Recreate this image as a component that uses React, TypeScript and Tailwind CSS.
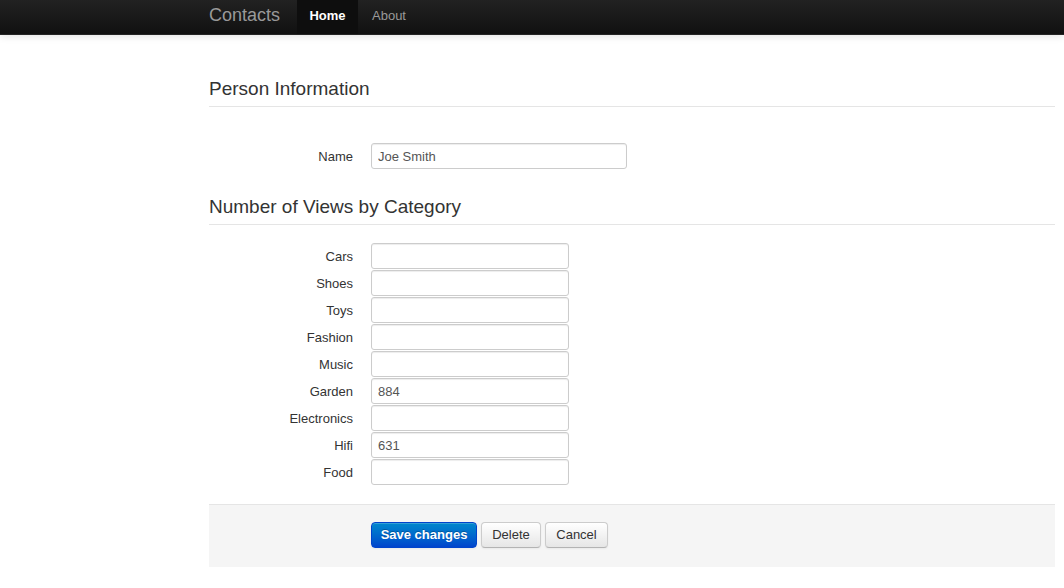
import React from "react";

const categories: { label: string; value: string }[] = [
  { label: "Cars", value: "" },
  { label: "Shoes", value: "" },
  { label: "Toys", value: "" },
  { label: "Fashion", value: "" },
  { label: "Music", value: "" },
  { label: "Garden", value: "884" },
  { label: "Electronics", value: "" },
  { label: "Hifi", value: "631" },
  { label: "Food", value: "" },
];

function Field({ label, value, width }: { label: string; value: string; width: string }) {
  return (
    <div className="flex items-center h-[26px]">
      <label className="w-[144px] shrink-0 text-right text-[13px] text-[#333] pt-[1px]">{label}</label>
      <div className="ml-[18px]">
        <input
          readOnly
          value={value}
          className={`${width} h-[26px] border border-[#cccccc] rounded-[3px] bg-white px-[6px] text-[13px] text-[#555] shadow-[inset_0_1px_1px_rgba(0,0,0,0.075)] outline-none`}
        />
      </div>
    </div>
  );
}

function Legend({ children }: { children: React.ReactNode }) {
  return (
    <div className="h-[39px] border-b border-[#e5e5e5] flex items-center text-[19px] text-[#333] leading-none pt-[2px]">
      {children}
    </div>
  );
}

export default function App() {
  return (
    <div className="min-h-[588px] bg-white" style={{ fontFamily: '"Liberation Sans", Arial, Helvetica, sans-serif' }}>
      <div className="h-[35px] bg-gradient-to-b from-[#222222] to-[#111111] border-b border-[#252525] shadow-[0_1px_8px_rgba(0,0,0,0.12)]">
        <div className="ml-[209px] flex h-full items-stretch">
          <div className="flex items-center pb-[3px] text-[18px] text-[#999] w-[88px]">Contacts</div>
          <div className="flex items-center pb-[3px] bg-[#0e0e0e] w-[61px] justify-center text-[13px] font-bold text-white [text-shadow:0_-1px_0_rgba(0,0,0,0.25)]">
            Home
          </div>
          <div className="flex items-center pb-[3px] px-[14px] text-[13px] text-[#999]">About</div>
        </div>
      </div>

      <div className="ml-[209px] w-[846px]">
        <div className="mt-[33px]">
          <Legend>Person Information</Legend>
        </div>
        <div className="mt-[36px]">
          <Field label="Name" value="Joe Smith" width="w-[256px]" />
        </div>
        <div className="mt-[17px]">
          <Legend>Number of Views by Category</Legend>
        </div>
        <div className="mt-[18px] flex flex-col gap-[1px]">
          {categories.map((c) => (
            <Field key={c.label} label={c.label} value={c.value} width="w-[198px]" />
          ))}
        </div>
        <div className="mt-[19px] h-[63px] border-t border-[#e5e5e5] bg-[#f5f5f5] pt-[17px] pl-[162px] flex gap-[4px] items-start">
          <button className="w-[106px] h-[26px] rounded-[4px] border border-[#0044cc] bg-gradient-to-b from-[#0088cc] to-[#0044cc] text-white text-[13px] font-bold [text-shadow:0_-1px_0_rgba(0,0,0,0.25)] shadow-[inset_0_1px_0_rgba(255,255,255,0.2),0_1px_2px_rgba(0,0,0,0.05)]">
            Save changes
          </button>
          <button className="w-[60px] h-[26px] rounded-[4px] border border-[#cccccc] border-b-[#b3b3b3] bg-gradient-to-b from-white to-[#e6e6e6] text-[#333] text-[13px] shadow-[inset_0_1px_0_rgba(255,255,255,0.2),0_1px_2px_rgba(0,0,0,0.05)]">
            Delete
          </button>
          <button className="w-[63px] h-[26px] rounded-[4px] border border-[#cccccc] border-b-[#b3b3b3] bg-gradient-to-b from-white to-[#e6e6e6] text-[#333] text-[13px] shadow-[inset_0_1px_0_rgba(255,255,255,0.2),0_1px_2px_rgba(0,0,0,0.05)]">
            Cancel
          </button>
        </div>
      </div>
    </div>
  );
}
